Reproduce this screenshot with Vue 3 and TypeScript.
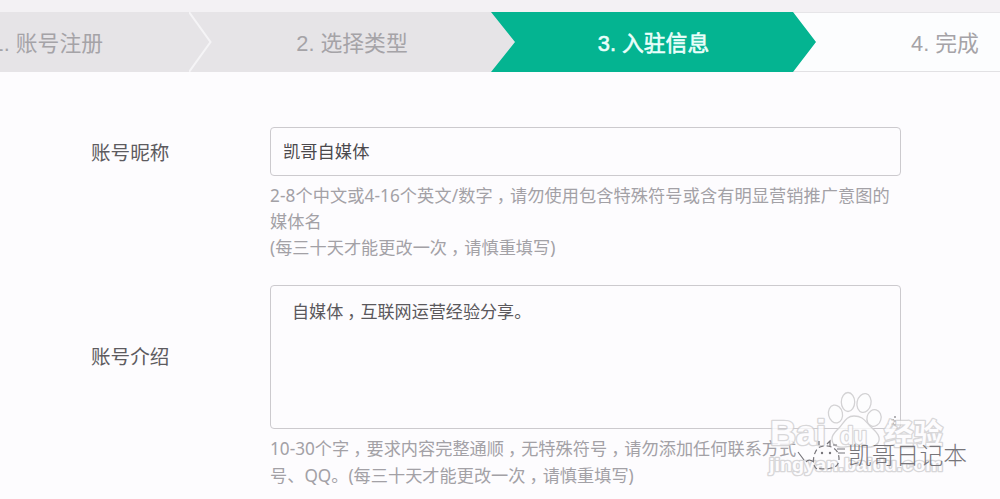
<script setup lang="ts">
interface Step { label: string; state: 'done' | 'active' | 'todo' }
interface MarkText { text: string; x: number; y: number; size: number; width: number }

const steps: Step[] = [
  { label: '1. 账号注册', state: 'done' },
  { label: '2. 选择类型', state: 'done' },
  { label: '3. 入驻信息', state: 'active' },
  { label: '4. 完成', state: 'todo' },
]

const nickHints: string[] = [
  '2-8个中文或4-16个英文/数字，请勿使用包含特殊符号或含有明显营销推广意图的',
  '媒体名',
  '(每三十天才能更改一次，请慎重填写)',
]
const introHints: string[] = [
  '10-30个字，要求内容完整通顺，无特殊符号，请勿添加任何联系方式',
  '号、QQ。(每三十天才能更改一次，请慎重填写)',
]
const intro = '自媒体，互联网运营经验分享。'

const markTexts: MarkText[] = [
  { text: 'Bai', x: 20, y: 65, size: 35, width: 56 },
  { text: 'du', x: 90, y: 64, size: 24, width: 27 },
  { text: '经验', x: 134, y: 65, size: 29, width: 59 },
  { text: 'jingyan.baidu.com', x: 19, y: 91, size: 18, width: 174 },
]

// Commas are set apart so they can sit in the middle of their cell.
const pieces = (line: string): string[] => line.split(/(，)/)
</script>

<template>
  <div class="page">
    <ol class="steps">
      <li v-for="(step, i) in steps" :key="step.label" class="step" :class="step.state">
        <span class="label">{{ step.label }}</span>
        <svg v-if="i === 0" class="chevron" width="24" height="60" viewBox="0 0 24 60">
          <path d="M0 0 L21.5 30 L0 60" fill="none" stroke="#f5f4f6" stroke-width="2" />
        </svg>
      </li>
    </ol>

    <main class="form">
      <section class="row nick">
        <div class="name">账号昵称</div>
        <div class="field">
          <div class="input">凯哥自媒体</div>
          <div class="hints">
            <p v-for="line in nickHints" :key="line"><span v-for="(t, k) in pieces(line)" :key="k" :class="{ comma: t === '，' }">{{ t }}</span></p>
          </div>
        </div>
      </section>
      <section class="row intro">
        <div class="name">账号介绍</div>
        <div class="field">
          <div class="area"><span v-for="(t, k) in pieces(intro)" :key="k" :class="{ comma: t === '，' }">{{ t }}</span></div>
          <div class="hints">
            <p v-for="line in introHints" :key="line"><span v-for="(t, k) in pieces(line)" :key="k" :class="{ comma: t === '，' }">{{ t }}</span></p>
          </div>
        </div>
      </section>
    </main>

    <svg class="mark" width="250" height="119" viewBox="0 0 250 119">
      <path d="M141 40 h3 M141 44 h3 M145 36 v2 M145 40 v2 M145 44 v2 M138 44 h1" stroke="#8d8b90" stroke-width="1.3" />
      <g class="paw">
        <ellipse cx="85.500" cy="34" rx="7" ry="9" transform="rotate(-12 85.5 34)" />
        <ellipse cx="98" cy="22" rx="6.700" ry="9.500" />
        <ellipse cx="114" cy="23" rx="7" ry="9.500" transform="rotate(12 114 23)" />
        <ellipse cx="124" cy="38" rx="7" ry="8.500" transform="rotate(15 124 38)" />
        <path d="M104 36 C96 36 94 43 89 48 C84 53 80 57 83 63 C87 70 96 66 104 66 C113 66 123 70 128 63 C132 56 125 51 120 46 C115 41 113 36 104 36Z" />
      </g>
      <g class="baidu">
        <text v-for="m in markTexts" :key="m.text" :x="m.x" :y="m.y" :font-size="m.size" :textLength="m.width" lengthAdjust="spacingAndGlyphs">{{ m.text }}</text>
      </g>
      <g fill="none" stroke="#77757a" stroke-width="1.2">
        <path d="M67 89 C61 86 63 70 70 67 C77 64 85 67 88 73 C91 82 87 88 81 88 C75 90 70 88 67 89" stroke-dasharray="5 3" />
        <path d="M48 72 L54 80 M56 82 C58 79 61 80 64 82 M69 61 v4 M77 64 L80 61 V66 M83 65 h4 M87 69 h8 M88 73 h7" />
      </g>
      <g fill="#77757a"><circle cx="72" cy="73" r="1.200" /><circle cx="80" cy="73" r="1.200" /></g>
      <text class="sign" x="98" y="84" font-size="24" textLength="119" lengthAdjust="spacingAndGlyphs">凯哥日记本</text>
    </svg>
  </div>
</template>

<style>
html, body { margin: 0; overflow: hidden; background: #fdfcfe; }
</style>

<style scoped>
.page {
  position: relative;
  box-sizing: border-box;
  width: 1000px;
  height: 499px;
  padding-top: 12px;
  overflow: hidden;
  background: linear-gradient(#f3f1f4 12px, #fdfcfe 12px);
  font-family: "Noto Sans", "Noto Sans CJK SC", sans-serif;
}
.steps {
  display: flex;
  width: 1230px;
  height: 60px;
  margin: 0 0 0 -112px;
  padding: 0;
  list-style: none;
  font-family: "Liberation Sans", "Noto Sans CJK SC", sans-serif;
  font-size: 21.8px;
}
.step {
  display: flex;
  flex: 0 0 325px;
  box-sizing: border-box;
  align-items: center;
  justify-content: center;
  margin-right: -23.5px;
  background: #e6e4e7;
  color: #a5a3a7;
}
.label { padding-top: 3px; line-height: 60px; white-space: pre; }
.step:first-child { z-index: 1; justify-content: flex-end; }
.step:first-child .label { margin-right: 86px; }
.active {
  z-index: 1;
  background: #04b491;
  color: #eafffb;
  font-weight: 400;
  -webkit-text-stroke: .6px #eafffb;
  clip-path: polygon(0 0, 302px 0, 100% 50%, 302px 100%, 0 100%, 24px 50%);
}
.todo {
  padding-right: 20px;
  border-top: 1px solid #e6e5e8;
  border-bottom: 1px solid #e2e1e4;
  background: #fcfdfe;
}
.form { padding: 55px 0 0 91px; }
.row { display: flex; }
.name { width: 179px; flex: none; color: #5d5b5f; font-size: 19.6px; line-height: 52px; }
.field { width: 632px; }
.input, .area {
  box-sizing: border-box;
  width: 631px;
  border: 1px solid #cccace;
  border-radius: 4px;
  color: #4b494d;
  font-size: 17.3px;
}
.input { height: 49px; padding-left: 12px; line-height: 48px; }
.area { height: 144px; padding: 12px 21px; color: #5a585c; font-size: 17.1px; line-height: 27px; }
.hints { padding-top: 7px; color: #a3a1a6; font-size: 17.2px; line-height: 26px; }
.nick .hints p:first-child { letter-spacing: .08px; }
.hints p { margin: 0; white-space: nowrap; }
.comma { margin: 0 -4px 0 4px; }
.intro { margin-top: 24px; }
.intro .name { padding-top: 46px; }
.intro .hints { line-height: 26.5px; }
.mark { position: absolute; left: 750px; top: 380px; }
.paw { fill: #fdfcfe; fill-opacity: .8; stroke: #d3d2d4; stroke-width: 1.3; }
.baidu {
  fill: #fdfcfe;
  stroke: #cfced0;
  stroke-width: 2.6px;
  stroke-linejoin: round;
  paint-order: stroke;
  opacity: .8;
  font-family: "Liberation Sans", "Noto Sans CJK SC", sans-serif;
  font-weight: 700;
}
.sign { fill: #77757a; font-family: "Noto Sans CJK SC", sans-serif; font-weight: 300; }
</style>
